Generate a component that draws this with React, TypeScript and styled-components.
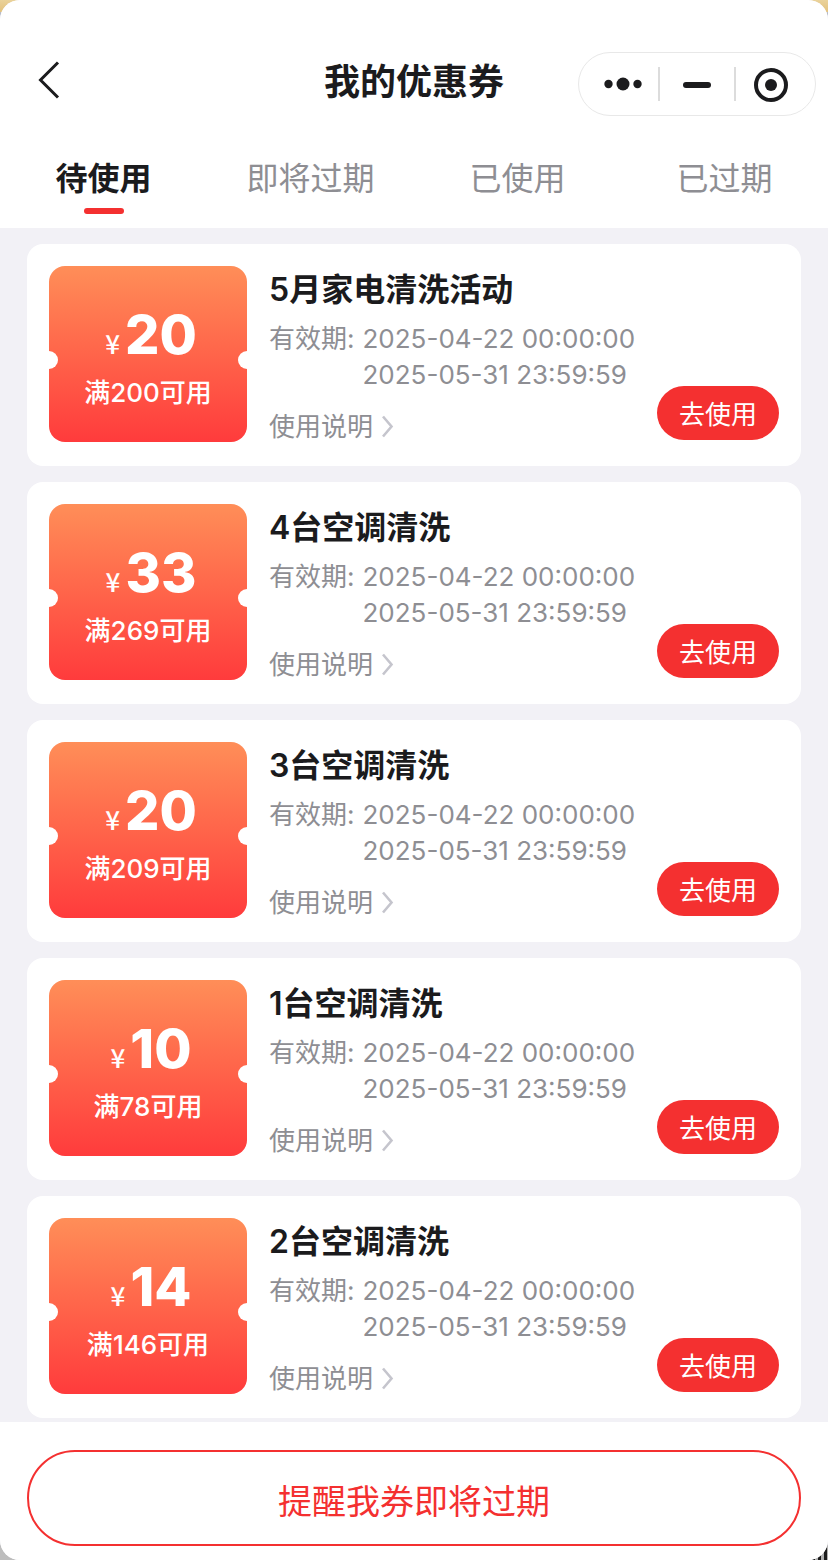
import React, { useState } from 'react';
import styled, { createGlobalStyle } from 'styled-components';

const red = '#f43030';
const ink = '#1b1b1d';
const muted = '#8e8e93';

const GlobalStyle = createGlobalStyle`
  * { box-sizing: border-box; }
  html, body { margin: 0; }
  body {
    background:
      linear-gradient(#ead29a, #e3c27e) top / 100% 12px no-repeat,
      linear-gradient(#b9bfd0, #b4b4b6 40px) top / 100% 50% no-repeat,
      repeating-linear-gradient(90deg, #1c1c1c 0 3px, #b0b0b0 3px 6px) right bottom / 40px 40px no-repeat,
      #bdbdbd;
    color: ${ink};
    font-family: Inter, "Noto Sans CJK SC", sans-serif;
  }
  button { font-family: inherit; margin: 0; padding: 0; border: 0; background: none; color: inherit; cursor: pointer; }
`;

const Phone = styled.div`
  display: flex;
  flex-direction: column;
  height: 100vh;
  border-radius: 20px;
  overflow: hidden;
  background: #f2f1f6;
`;

const Header = styled.header`
  flex: none;
  background: #fff;
`;

const NavBar = styled.div`
  display: grid;
  grid-template-columns: 1fr auto 1fr;
  align-items: center;
  padding: 52px 12px 16px;
`;

const BackButton = styled.button`
  display: flex;
  justify-self: start;
  margin-bottom: 8px;
  padding: 8px 24px;
`;

const PageTitle = styled.h1`
  margin: 0 0 4px;
  font-size: 36px;
  line-height: 48px;
  font-weight: 600;
`;

const Capsule = styled.div`
  display: flex;
  align-items: center;
  justify-content: center;
  justify-self: end;
  width: 238px;
  height: 64px;
  border: 1px solid #e8e8e8;
  border-radius: 32px;
`;

const CapsuleButton = styled.button`
  display: flex;
  justify-content: center;
  align-items: center;
  width: 74px;
  height: 34px;

  & + & {
    width: 76px;
    border-left: 2px solid #dcdcdc;
  }
  &:first-child { padding-left: 4px; }
  &:last-child { padding-right: 4px; }
`;

const Tabs = styled.nav`
  display: grid;
  grid-template-columns: repeat(4, 1fr);
`;

const Tab = styled.button<{ $active: boolean }>`
  display: flex;
  flex-direction: column;
  align-items: center;
  height: 96px;
  padding-top: 24px;
  font-size: 32px;
  line-height: 46px;
  font-weight: ${p => (p.$active ? 600 : 400)};
  color: ${p => (p.$active ? ink : muted)};

  &::after {
    content: '';
    width: 40px;
    height: 6px;
    margin-top: 6px;
    border-radius: 3px;
    background: ${p => (p.$active ? red : 'transparent')};
  }
`;

const List = styled.main`
  flex: 1;
  min-height: 0;
  overflow-y: auto;
  display: flex;
  flex-direction: column;
  gap: 16px;
  padding: 16px 27px 0;
`;

const Card = styled.article`
  flex: none;
  display: flex;
  gap: 22px;
  padding: 22px 22px 24px;
  border-radius: 16px;
  background: #fff;
`;

const Ticket = styled.div`
  position: relative;
  flex: none;
  display: flex;
  flex-direction: column;
  align-items: center;
  width: 198px;
  height: 176px;
  padding-top: 37px;
  border-radius: 16px;
  overflow: hidden;
  background: linear-gradient(#ff8e58, #ff3b3c);
  color: #fff;

  &::before, &::after {
    content: '';
    position: absolute;
    top: 85px;
    width: 18px;
    height: 18px;
    border-radius: 50%;
    background: #fff;
  }
  &::before { left: -9px; }
  &::after { right: -9px; }
`;

const Amount = styled.div`
  display: flex;
  align-items: baseline;
  gap: 5px;
  padding-left: 6px;
  font-size: 54px;
  line-height: 64px;
  font-weight: 800;
`;

const Currency = styled.span`
  font-family: "Noto Sans CJK SC", sans-serif;
  font-size: 26px;
  line-height: 32px;
  font-weight: 500;
`;

const Condition = styled.div`
  margin-top: 8px;
  font-size: 26px;
  line-height: 36px;
  font-weight: 500;
`;

const Info = styled.div`
  flex: 1;
  display: flex;
  flex-direction: column;
  min-width: 0;
`;

const CardTitle = styled.h2`
  margin: 0 0 7px;
  font-size: 32px;
  line-height: 48px;
  font-weight: 600;
`;

const Validity = styled.div`
  display: flex;
  gap: 8px;
  font-size: 26px;
  line-height: 36px;
  color: ${muted};
`;

const Dates = styled.div`
  display: flex;
  flex-direction: column;
`;

const CardFooter = styled.div`
  flex: 1;
  display: flex;
  justify-content: space-between;
  align-items: flex-end;
`;

const DetailsButton = styled.button`
  display: flex;
  align-items: center;
  gap: 8px;
  margin-bottom: -3px;
  font-size: 26px;
  line-height: 36px;
  color: ${muted};
`;

const UseButton = styled.button`
  width: 122px;
  height: 54px;
  margin: -8px 0 2px;
  padding-top: 4px;
  border-radius: 27px;
  background: ${red};
  color: #fff;
  font-size: 26px;
  line-height: 36px;
`;

const Footer = styled.footer`
  flex: none;
  padding: 28px 27px 14px;
  background: #fff;
`;

const RemindButton = styled.button`
  width: 100%;
  height: 96px;
  padding-top: 8px;
  border: 2px solid ${red};
  border-radius: 48px;
  color: ${red};
  font-size: 34px;
  line-height: 48px;
`;

const tabs = ['待使用', '即将过期', '已使用', '已过期'];

const coupons = [
  { amount: 20, min: 200, title: '5月家电清洗活动' },
  { amount: 33, min: 269, title: '4台空调清洗' },
  { amount: 20, min: 209, title: '3台空调清洗' },
  { amount: 10, min: 78, title: '1台空调清洗' },
  { amount: 14, min: 146, title: '2台空调清洗' },
];

export default function App() {
  const [active, setActive] = useState(0);
  return (
    <>
      <GlobalStyle />
      <Phone>
        <Header>
          <NavBar>
            <BackButton aria-label="返回">
              <svg width="26" height="40" viewBox="0 0 26 40" fill="none" stroke={ink} strokeWidth="3">
                <path d="M22 2.5 4.5 20 22 37.5" />
              </svg>
            </BackButton>
            <PageTitle>我的优惠券</PageTitle>
            <Capsule>
              <CapsuleButton aria-label="更多">
                <svg width="38" height="14" viewBox="0 0 38 14" fill={ink}>
                  <circle cx="4.5" cy="7" r="4.2" />
                  <circle cx="19" cy="7" r="6.5" />
                  <circle cx="33.5" cy="7" r="4.2" />
                </svg>
              </CapsuleButton>
              <CapsuleButton aria-label="最小化">
                <svg width="28" height="8" viewBox="0 0 28 8" fill={ink}>
                  <rect y="2" width="28" height="6" rx="3" />
                </svg>
              </CapsuleButton>
              <CapsuleButton aria-label="关闭">
                <svg width="34" height="36" viewBox="0 0 34 36">
                  <circle cx="17" cy="19" r="15" fill="none" stroke={ink} strokeWidth="4" />
                  <circle cx="17" cy="19" r="6" fill={ink} />
                </svg>
              </CapsuleButton>
            </Capsule>
          </NavBar>
          <Tabs>
            {tabs.map((label, i) => (
              <Tab key={label} $active={i === active} onClick={() => setActive(i)}>
                {label}
              </Tab>
            ))}
          </Tabs>
        </Header>
        <List>
          {coupons.map(c => (
            <Card key={c.title}>
              <Ticket>
                <Amount>
                  <Currency>¥</Currency>
                  {c.amount}
                </Amount>
                <Condition>满{c.min}可用</Condition>
              </Ticket>
              <Info>
                <CardTitle>{c.title}</CardTitle>
                <Validity>
                  <span>有效期:</span>
                  <Dates>
                    <time>2025-04-22 00:00:00</time>
                    <time>2025-05-31 23:59:59</time>
                  </Dates>
                </Validity>
                <CardFooter>
                  <DetailsButton>
                    使用说明
                    <svg width="14" height="24" viewBox="0 0 14 24" fill="none" stroke="#c5c5cd" strokeWidth="2.6">
                      <path d="M2 1.5 10.5 11.5 2 21.5" />
                    </svg>
                  </DetailsButton>
                  <UseButton>去使用</UseButton>
                </CardFooter>
              </Info>
            </Card>
          ))}
        </List>
        <Footer>
          <RemindButton>提醒我券即将过期</RemindButton>
        </Footer>
      </Phone>
    </>
  );
}
